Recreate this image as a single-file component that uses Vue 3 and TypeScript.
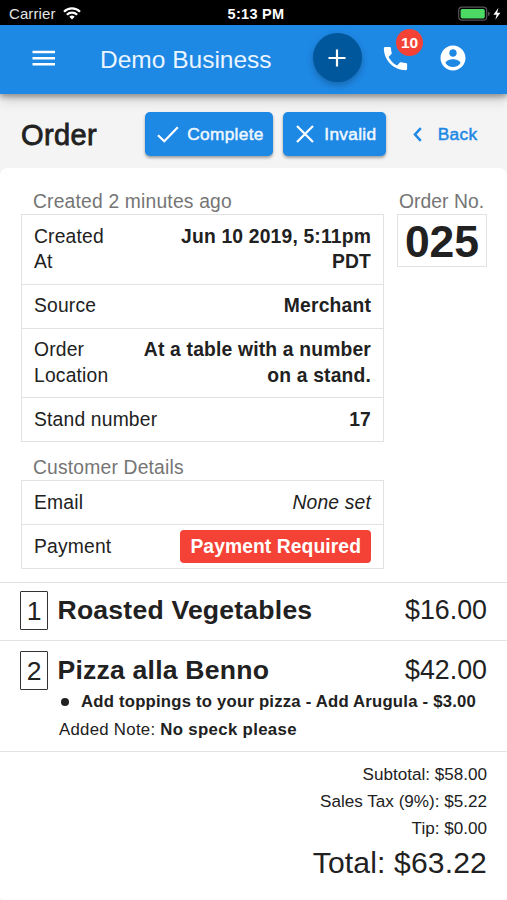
<script setup lang="ts">
interface DetailRow {
  label: string
  value: string
  kind?: 'empty' | 'alert'
  narrow?: boolean
}

interface OrderItem {
  quantity: number
  name: string
  price: string
  options: string[]
  note?: string
}

const details: DetailRow[] = [
  { label: 'Created At', value: 'Jun 10 2019, 5:11pm PDT', narrow: true },
  { label: 'Source', value: 'Merchant' },
  { label: 'Order Location', value: 'At a table with a number on a stand.', narrow: true },
  { label: 'Stand number', value: '17' },
]

const customer: DetailRow[] = [
  { label: 'Email', value: 'None set', kind: 'empty' },
  { label: 'Payment', value: 'Payment Required', kind: 'alert' },
]

const items: OrderItem[] = [
  { quantity: 1, name: 'Roasted Vegetables', price: '$16.00', options: [] },
  {
    quantity: 2,
    name: 'Pizza alla Benno',
    price: '$42.00',
    options: ['Add toppings to your pizza - Add Arugula - $3.00'],
    note: 'No speck please',
  },
]

const totals: string[] = ['Subtotal: $58.00', 'Sales Tax (9%): $5.22', 'Tip: $0.00']
</script>

<template>
  <div class="screen">
    <div class="status">
      <div class="carrier">
        <span>Carrier</span>
        <svg width="18" height="13" viewBox="0 0 18 13" fill="none" stroke="#fff" stroke-width="2.3">
          <path d="M1 4.7A11.4 11.4 0 0 1 17 4.7" />
          <path d="M3.9 7.8A7.2 7.2 0 0 1 14.1 7.8" />
          <path d="M9 12.6 6.3 9.8A3.9 3.9 0 0 1 11.7 9.8Z" fill="#fff" stroke="none" />
        </svg>
      </div>
      <div class="time">5:13 PM</div>
      <div class="power">
        <svg width="43" height="16" viewBox="0 0 43 16">
          <rect x="0.7" y="1.2" width="28" height="13" rx="3.4" fill="none" stroke="#56565a" stroke-width="1.2" />
          <rect x="2.6" y="3" width="24.2" height="9.4" rx="1.6" fill="#4cd964" />
          <path d="M30 5.4Q31.8 6 31.8 7.7T30 10Z" fill="#56565a" />
          <path d="M40.4 1.8 35.4 8.7H38.6L37.3 13.8 42.4 6.7H39.2Z" fill="#fff" />
        </svg>
      </div>
    </div>

    <header class="appbar">
      <svg class="menu" width="24" height="18" viewBox="0 0 24 18" fill="#fff">
        <path d="M.5 1.8h22.5v2.5H.5zM.5 7.9h22.5v2.5H.5zM.5 14h22.5v2.5H.5z" />
      </svg>
      <div class="brand">Demo Business</div>
      <button class="add" aria-label="Add">
        <svg width="20" height="20" viewBox="0 0 20 20" stroke="#fff" stroke-width="2.2">
          <path d="M10 1.5v17M1.5 10h17" />
        </svg>
      </button>
      <div class="phone">
        <svg width="31" height="31" viewBox="0 0 24 24" fill="#fff">
          <path d="M6.62 10.79c1.44 2.83 3.76 5.14 6.59 6.59l2.2-2.2c.27-.27.67-.36 1.02-.24 1.12.37 2.33.57 3.57.57.55 0 1 .45 1 1V20c0 .55-.45 1-1 1-9.39 0-17-7.61-17-17 0-.55.45-1 1-1h3.5c.55 0 1 .45 1 1 0 1.25.2 2.45.57 3.57.11.35.03.74-.25 1.02l-2.2 2.2z" />
        </svg>
        <span class="badge">10</span>
      </div>
      <svg class="account" width="30" height="30" viewBox="0 0 24 24" fill="#fff">
        <path d="M12 2C6.48 2 2 6.48 2 12s4.48 10 10 10 10-4.48 10-10S17.52 2 12 2zm0 3c1.66 0 3 1.34 3 3s-1.34 3-3 3-3-1.34-3-3 1.34-3 3-3zm0 14.2c-2.5 0-4.71-1.28-6-3.22.03-1.99 4-3.08 6-3.08 1.99 0 5.97 1.09 6 3.08-1.29 1.94-3.5 3.22-6 3.22z" />
      </svg>
    </header>

    <section class="toolbar">
      <h1>Order</h1>
      <button class="action complete">
        <svg width="22" height="17" viewBox="0 0 22 17" fill="none" stroke="#fff" stroke-width="2.2">
          <path d="M1 9.2 7.3 15.2 20.8 1.2" />
        </svg>
        <span>Complete</span>
      </button>
      <button class="action invalid">
        <svg width="18" height="18" viewBox="0 0 18 18" fill="none" stroke="#fff" stroke-width="2.2">
          <path d="M1 1 17 17M17 1 1 17" />
        </svg>
        <span>Invalid</span>
      </button>
      <button class="back">
        <svg width="9" height="15" viewBox="0 0 9 15" fill="none" stroke="#1e88e5" stroke-width="2.5">
          <path d="M7.8 1.2 2 7.5 7.8 13.8" />
        </svg>
        <span>Back</span>
      </button>
    </section>

    <main class="card">
      <div class="summary">
        <div class="left">
          <div class="caption">Created 2 minutes ago</div>
          <div class="table">
            <div v-for="row in details" :key="row.label" class="row">
              <span class="label" :class="{ narrow: row.narrow }">{{ row.label }}</span>
              <span class="value">{{ row.value }}</span>
            </div>
          </div>
          <div class="caption second">Customer Details</div>
          <div class="table">
            <div v-for="row in customer" :key="row.label" class="row">
              <span class="label">{{ row.label }}</span>
              <span class="value" :class="row.kind">{{ row.value }}</span>
            </div>
          </div>
        </div>
        <div class="right">
          <div class="caption number-caption">Order No.</div>
          <div class="number">025</div>
        </div>
      </div>

      <article v-for="item in items" :key="item.name" class="item">
        <div class="item-head">
          <span class="qty">{{ item.quantity }}</span>
          <span class="name">{{ item.name }}</span>
          <span class="price">{{ item.price }}</span>
        </div>
        <div v-for="option in item.options" :key="option" class="option">
          <i class="dot"></i><span>{{ option }}</span>
        </div>
        <div v-if="item.note" class="note">Added Note: <b>{{ item.note }}</b></div>
      </article>

      <div class="totals">
        <div v-for="line in totals" :key="line" class="line">{{ line }}</div>
        <div class="total">Total: $63.22</div>
      </div>
    </main>
  </div>
</template>

<style>
body {
  margin: 0;
  background: #f4f4f4;
}
</style>

<style scoped>
.screen {
  width: 507px;
  height: 900px;
  overflow: hidden;
  display: flex;
  flex-direction: column;
  background: #f4f4f4;
  color: #212121;
  font-family: 'Liberation Sans', Arial, sans-serif;
}
button {
  border: 0;
  padding: 0;
  margin: 0;
  background: none;
  font: inherit;
}
svg {
  display: block;
  flex: none;
}
.status {
  height: 25px;
  flex: none;
  box-sizing: border-box;
  display: grid;
  grid-template-columns: 1fr auto 1fr;
  align-items: center;
  padding: 2px 6px 0 9px;
  background: #000;
  color: #fff;
  font-size: 15px;
}
.carrier {
  display: flex;
  align-items: center;
  gap: 7px;
  color: #e4e4e4;
  letter-spacing: 0.1px;
}
.time {
  font-weight: bold;
  font-size: 14.5px;
  letter-spacing: 0.3px;
  padding-left: 2px;
}
.power {
  display: flex;
  justify-content: flex-end;
}
.appbar {
  height: 69px;
  flex: none;
  display: flex;
  align-items: center;
  background: #1e88e5;
  position: relative;
  box-shadow: 0 3px 5px rgba(0, 0, 0, 0.3), 0 5px 13px rgba(0, 0, 0, 0.18);
  color: #fff;
}
.menu {
  margin: 0 0 3px 32px;
}
.brand {
  width: 212.5px;
  margin-left: 44px;
  font-size: 24.5px;
  color: #eaf5ff;
}
.add {
  width: 49px;
  height: 49px;
  margin-bottom: 4px;
  border-radius: 50%;
  background: #01579b;
  display: grid;
  place-items: center;
  box-shadow: 0 3px 6px rgba(0, 0, 0, 0.25);
}
.phone {
  position: relative;
  margin: 0 0 2px 18.5px;
}
.badge {
  position: absolute;
  left: 16px;
  top: -14px;
  width: 27px;
  height: 27px;
  border-radius: 50%;
  background: #f44336;
  font-size: 15.5px;
  font-weight: bold;
  line-height: 27px;
  text-align: center;
}
.account {
  margin: 0 0 3px 27px;
}
.toolbar {
  height: 74px;
  flex: none;
  box-sizing: border-box;
  display: flex;
  align-items: flex-start;
  padding: 18px 0 0 21px;
}
h1 {
  width: 124.3px;
  margin: 0;
  font-size: 29px;
  line-height: 46px;
  font-weight: normal;
  letter-spacing: 0.4px;
  -webkit-text-stroke: 0.8px #212121;
}
.action,
.back {
  height: 44px;
  display: flex;
  align-items: center;
  font-size: 17.3px;
  letter-spacing: 0.3px;
  -webkit-text-stroke: 0.5px currentColor;
}
.action {
  background: #1e88e5;
  color: #eef7ff;
  border-radius: 5px;
  box-shadow: 0 2px 3px rgba(0, 0, 0, 0.35);
}
.complete {
  width: 128px;
  padding-left: 12px;
  gap: 8px;
}
.invalid {
  width: 103px;
  margin-left: 10px;
  padding-left: 13px;
  gap: 10px;
}
.back {
  margin-left: 26.5px;
  gap: 16px;
  color: #1e88e5;
}
.card {
  flex: 1;
  background: #fff;
  border-radius: 8px 8px 4px 4px;
}
.summary {
  display: flex;
  justify-content: space-between;
  padding: 21px 20px 12.5px 21px;
  font-size: 19.3px;
  letter-spacing: 0.18px;
}
.left {
  width: 363px;
}
.right {
  width: 90px;
}
.caption {
  height: 25px;
  line-height: 25px;
  padding-left: 12px;
  color: #757575;
}
.second {
  margin-top: 13px;
}
.number-caption {
  padding-left: 2px;
  white-space: nowrap;
  letter-spacing: 0.05px;
}
.table {
  border: 1px solid #e2e2e2;
  box-sizing: border-box;
}
.row {
  display: flex;
  justify-content: space-between;
  padding: 8.75px 12px;
  line-height: 25.5px;
}
.row + .row {
  border-top: 1px solid #e2e2e2;
}
.label.narrow {
  width: 90px;
}
.value {
  max-width: 230px;
  text-align: right;
  font-weight: bold;
}
.value.empty {
  font-weight: normal;
  font-style: italic;
}
.value.alert {
  margin: -4px 0;
  padding: 4px 10px;
  border-radius: 4px;
  background: #f44336;
  color: #fff;
  letter-spacing: 0.08px;
}
.number {
  height: 53px;
  box-sizing: border-box;
  border: 1px solid #e2e2e2;
  font-size: 44.5px;
  line-height: 54px;
  font-weight: bold;
  letter-spacing: 0;
  text-align: center;
}
.item {
  border-top: 1px solid #e2e2e2;
  padding: 7px 20px 9px;
}
.item + .item {
  padding: 9px 20px 7px;
}
.item-head {
  display: flex;
  align-items: center;
  height: 41px;
}
.qty {
  width: 28px;
  height: 39px;
  box-sizing: border-box;
  border: 1.4px solid #333;
  border-radius: 1px;
  font-size: 26.5px;
  line-height: 39px;
  text-align: center;
}
.name {
  flex: 1;
  margin-left: 9.5px;
  font-size: 26.6px;
  font-weight: bold;
  letter-spacing: 0.2px;
}
.price {
  font-size: 26.8px;
}
.option {
  display: flex;
  align-items: center;
  height: 22px;
  padding-left: 41px;
  font-size: 16.7px;
  font-weight: bold;
  letter-spacing: 0.22px;
  white-space: nowrap;
}
.dot {
  width: 8px;
  height: 8px;
  margin-right: 12px;
  border-radius: 50%;
  background: #212121;
}
.note {
  height: 31px;
  line-height: 34px;
  padding-left: 39px;
  font-size: 16.8px;
  letter-spacing: 0.28px;
}
.note b {
  letter-spacing: 0.33px;
}
.totals {
  border-top: 1px solid #e2e2e2;
  padding: 9px 20px 0 0;
  text-align: right;
  font-size: 17.1px;
}
.line {
  line-height: 27px;
}
.total {
  font-size: 30.1px;
  line-height: 41px;
  letter-spacing: 0.15px;
}
</style>
